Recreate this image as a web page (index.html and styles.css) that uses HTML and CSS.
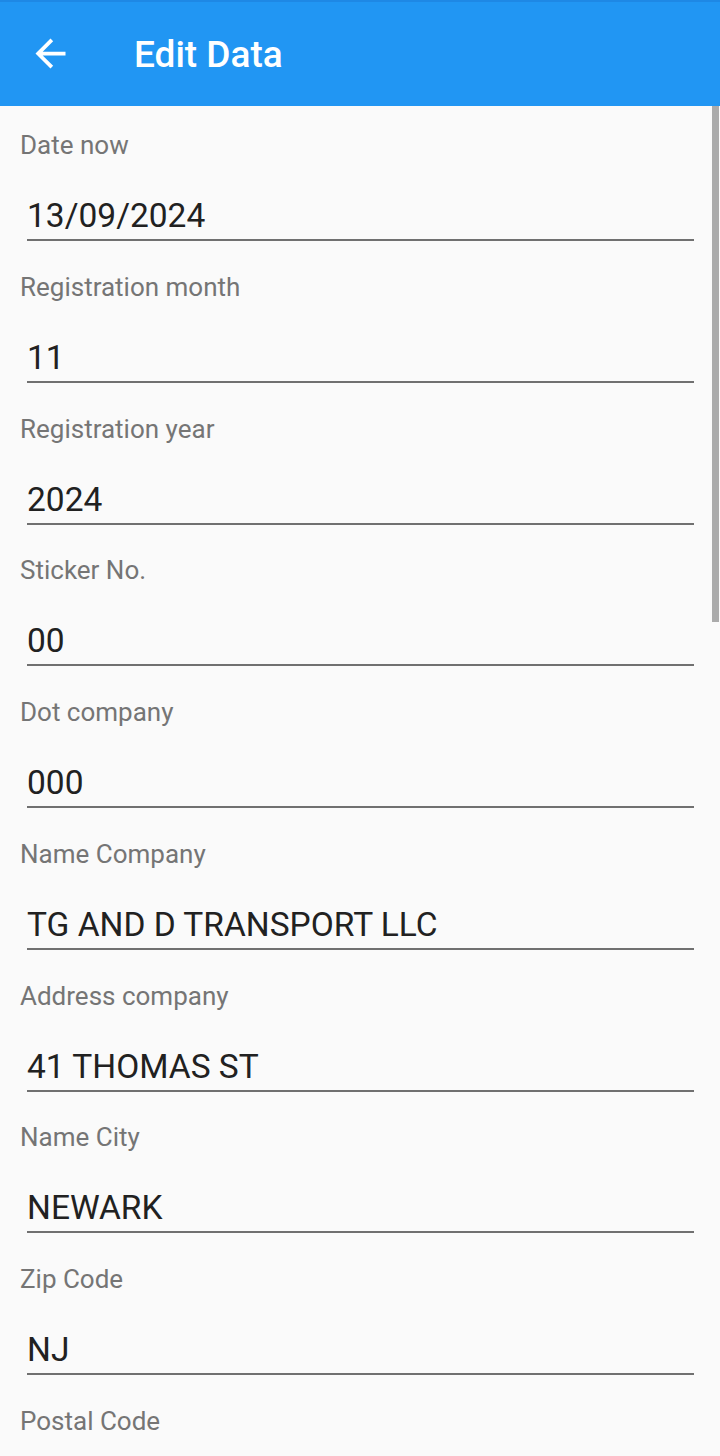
FILE: index.html
```html
<!DOCTYPE html>
<html lang="en">
<head>
<meta charset="utf-8">
<title>Edit Data</title>
<link rel="stylesheet" href="styles.css">
</head>
<body>
<header class="appbar">
  <svg class="back" viewBox="0 0 24 24" aria-hidden="true"><path d="M20 11H7.83l5.59-5.59L12 4l-8 8 8 8 1.41-1.41L7.83 13H20v-2z"/></svg>
  <h1 class="title">Edit Data</h1>
</header>
<main class="form">
  <div class="field"><div class="label">Date now</div><div class="value">13/09/2024</div></div>
  <div class="field"><div class="label">Registration month</div><div class="value">11</div></div>
  <div class="field"><div class="label">Registration year</div><div class="value">2024</div></div>
  <div class="field"><div class="label">Sticker No.</div><div class="value">00</div></div>
  <div class="field"><div class="label">Dot company</div><div class="value">000</div></div>
  <div class="field"><div class="label">Name Company</div><div class="value">TG AND D TRANSPORT LLC</div></div>
  <div class="field"><div class="label">Address company</div><div class="value">41 THOMAS ST</div></div>
  <div class="field"><div class="label">Name City</div><div class="value">NEWARK</div></div>
  <div class="field"><div class="label">Zip Code</div><div class="value">NJ</div></div>
  <div class="field"><div class="label">Postal Code</div><div class="value">&nbsp;</div></div>
</main>
<div class="scrollbar"></div>
</body>
</html>
```
FILE: styles.css
```css
* { box-sizing: border-box; }
html, body {
  margin: 0;
  padding: 0;
  height: 1456px;
  overflow: hidden;
  background: #fafafa;
  font-family: Roboto, "Liberation Sans", sans-serif;
}
.appbar {
  height: 106px;
  background: #2196f3;
  border-top: 2px solid #1e88e5;
  display: flex;
  align-items: center;
  padding-left: 28px;
}
.back {
  width: 45px;
  height: 45px;
  fill: #ffffff;
  flex: none;
  margin-top: -2px;
}
.title {
  margin: 0 0 0 61px;
  color: #ffffff;
  font-size: 37px;
  font-weight: 500;
  line-height: 40px;
  margin-top: 2px;
}
.form {
  padding-top: 24px;
}
.field {
  margin-bottom: 30.75px;
}
.label {
  margin-left: 20px;
  font-size: 26px;
  line-height: 30px;
  color: #757575;
}
.value {
  margin: 36px 26px 0 27px;
  font-size: 33.5px;
  line-height: 40px;
  color: #212121;
  padding-bottom: 3px;
  border-bottom: 2px solid #707070;
  white-space: nowrap;
}
.scrollbar {
  position: absolute;
  top: 106px;
  right: 1px;
  width: 7px;
  height: 516px;
  background: #ababab;
}
```
